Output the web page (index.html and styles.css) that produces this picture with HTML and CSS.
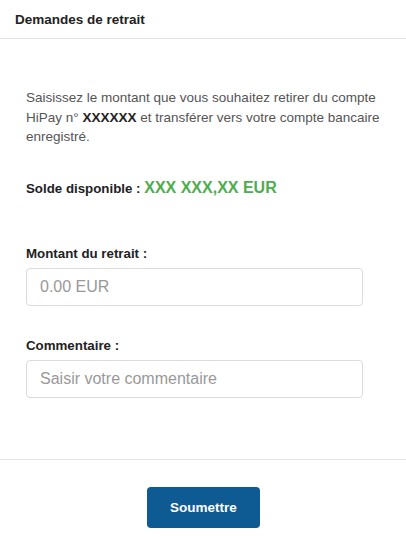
FILE: index.html
```html
<!DOCTYPE html>
<html lang="fr">
<head>
<meta charset="utf-8">
<link rel="stylesheet" href="styles.css">
</head>
<body>
<div class="panel">
  <div class="panel-header">Demandes de retrait</div>
  <div class="panel-body">
    <p class="intro">Saisissez le montant que vous souhaitez retirer du compte HiPay n° <strong>XXXXXX</strong> et transférer vers votre compte bancaire enregistré.</p>
    <p class="balance">Solde disponible : <span class="amount">XXX XXX,XX EUR</span></p>
    <div class="field">
      <label class="label">Montant du retrait :</label>
      <input class="input" type="text" placeholder="0.00 EUR">
    </div>
    <div class="field">
      <label class="label">Commentaire :</label>
      <input class="input" type="text" placeholder="Saisir votre commentaire">
    </div>
  </div>
  <div class="panel-footer">
    <button class="btn" type="button">Soumettre</button>
  </div>
</div>
</body>
</html>
```
FILE: styles.css
```css
html, body {
  margin: 0;
  padding: 0;
  background: #fff;
}
body {
  font-family: "Liberation Sans", Arial, sans-serif;
  color: #333;
}
.panel {
  width: 406px;
}
.panel-header {
  height: 39px;
  box-sizing: border-box;
  padding: 12px 15px 0;
  font-size: 13.5px;
  font-weight: bold;
  color: #222;
  border-bottom: 1px solid #e3e3e3;
}
.panel-body {
  padding: 49px 15px 61px 26px;
}
.intro {
  margin: 0;
  font-size: 13.5px;
  line-height: 19.5px;
  color: #555;
}
.intro strong {
  color: #222;
}
.balance {
  margin: 31px 0 0;
  font-size: 13.3px;
  font-weight: bold;
  color: #222;
  line-height: 20px;
}
.amount {
  color: #4cae4c;
  font-size: 16px;
}
.field {
  margin-top: 45px;
  display: flex;
  flex-direction: column;
  align-items: flex-start;
}
.field + .field {
  margin-top: 30px;
}
.label {
  font-size: 13.3px;
  font-weight: bold;
  color: #222;
  line-height: 20px;
  margin-bottom: 4px;
}
.input {
  box-sizing: border-box;
  height: 38px;
  width: 337px;
  border: 1px solid #dcdcdc;
  border-radius: 4px;
  padding: 0 13px;
  font-family: "Liberation Sans", Arial, sans-serif;
  font-size: 16px;
  color: #555;
}
.input::placeholder {
  color: #999;
}
.panel-footer {
  border-top: 1px solid #e3e3e3;
  display: flex;
  justify-content: center;
  padding-top: 27px;
  padding-bottom: 10px;
}
.btn {
  width: 113px;
  height: 41px;
  background: #0e5a92;
  color: #fff;
  border: none;
  border-radius: 4px;
  font-family: "Liberation Sans", Arial, sans-serif;
  font-size: 13.5px;
  font-weight: bold;
  margin-left: 1px;
}
```
